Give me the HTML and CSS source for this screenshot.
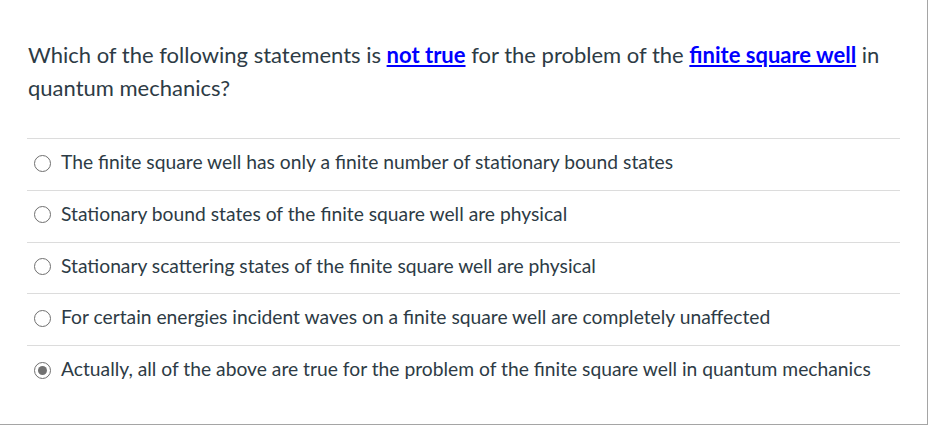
FILE: index.html
```html
<!DOCTYPE html>
<html>
<head>
<meta charset="utf-8">
<link rel="stylesheet" href="styles.css">
</head>
<body>
<div class="frame">
  <p class="question">Which of the following statements is <a class="hl" href="#">not true</a> for the problem of the <a class="hl" href="#">finite square well</a> in quantum mechanics?</p>
  <ul class="answers">
    <li class="answer"><span class="radio"></span><span class="label">The finite square well has only a finite number of stationary bound states</span></li>
    <li class="answer"><span class="radio"></span><span class="label">Stationary bound states of the finite square well are physical</span></li>
    <li class="answer"><span class="radio"></span><span class="label">Stationary scattering states of the finite square well are physical</span></li>
    <li class="answer"><span class="radio"></span><span class="label">For certain energies incident waves on a finite square well are completely unaffected</span></li>
    <li class="answer"><span class="radio checked"></span><span class="label">Actually, all of the above are true for the problem of the finite square well in quantum mechanics</span></li>
  </ul>
</div>
</body>
</html>
```
FILE: styles.css
```css
html, body {
  margin: 0;
  padding: 0;
  background: #fff;
}
body {
  font-family: Lato, "Open Sans", sans-serif;
  color: #2d3b45;
}
.frame {
  box-sizing: border-box;
  width: 928px;
  height: 425px;
  border-right: 1px solid #a5a5a5;
  border-bottom: 1px solid #a5a5a5;
  padding: 38px 0 0 0;
}
.question {
  margin: 0 0 0 28px;
  font-size: 22px;
  line-height: 33px;
  width: 870px;
}
.hl {
  color: #0000ff;
  font-weight: bold;
  text-decoration: underline;
}
.answers {
  list-style: none;
  margin: 34px 0 0 27px;
  padding: 0;
  width: 873px;
}
.answer {
  display: flex;
  align-items: center;
  box-sizing: content-box;
  height: 46.25px;
  padding: 0 0 4.5px 7px;
  border-top: 1px solid #dcdcdc;
  font-size: 19.25px;
}
.radio {
  box-sizing: border-box;
  width: 17px;
  height: 17px;
  border: 1px solid #6f6f6f;
  border-radius: 50%;
  flex: none;
  margin-right: 10px;
  position: relative;
  top: 1px;
}
.radio.checked::after {
  content: "";
  position: absolute;
  left: 3px;
  top: 3px;
  width: 9px;
  height: 9px;
  border-radius: 50%;
  background: #727272;
}
.label {
  line-height: 22px;
}
```
